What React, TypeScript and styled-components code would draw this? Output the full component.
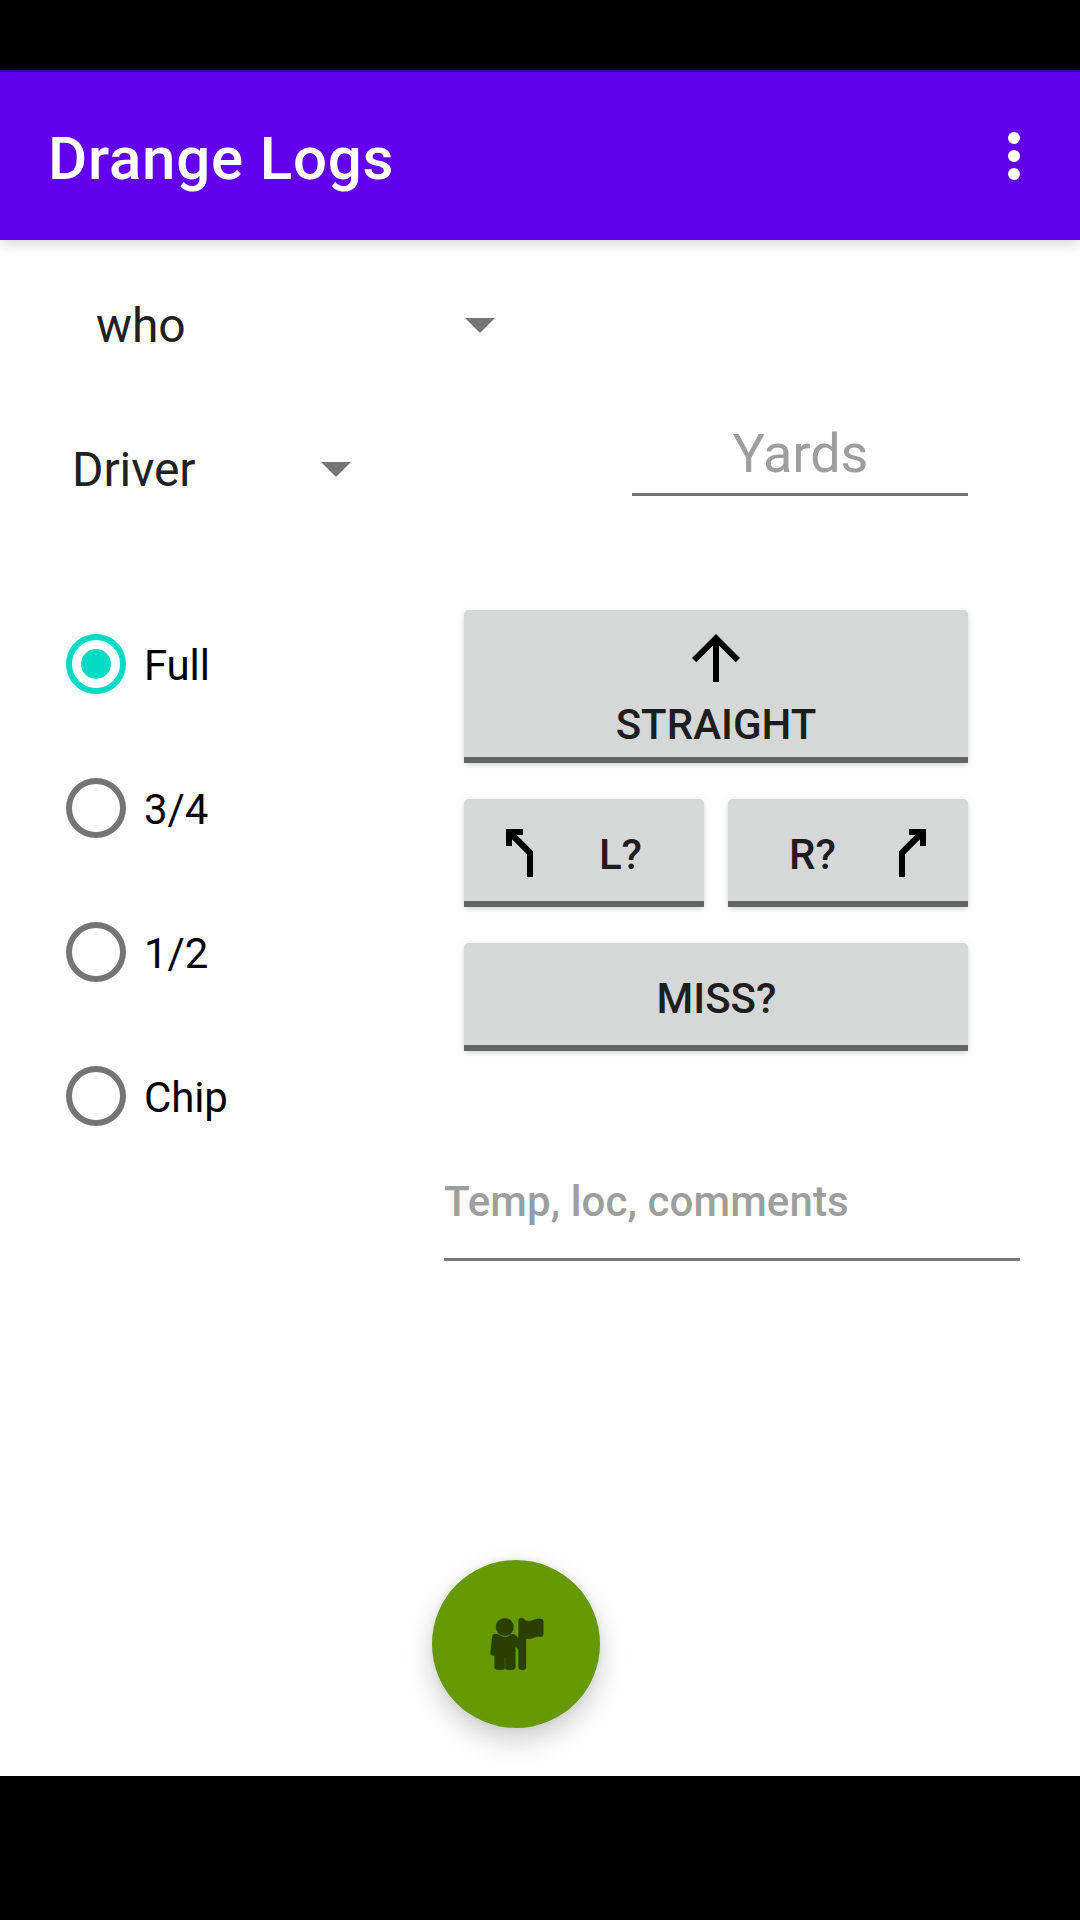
import React, { useState } from "react";
import styled, { createGlobalStyle } from "styled-components";

const GlobalStyle = createGlobalStyle`
  *, *::before, *::after { box-sizing: border-box; }
  body { margin: 0; background: #fff; font-family: Roboto, "Noto Sans", sans-serif; }
  button, input { font-family: inherit; border: 0; padding: 0; margin: 0; background: none; outline: none; border-radius: 0; }
`;

const Screen = styled.div`
  display: flex;
  flex-direction: column;
  width: 1080px;
  height: 1920px;
  background: #fff;
  overflow: hidden;
`;

const StatusBar = styled.div`
  height: 72px;
  flex: none;
  background: #000;
  border-bottom: 2px solid #3700b3;
`;

const NavigationBar = styled.div`
  height: 144px;
  flex: none;
  background: #000;
`;

const AppBar = styled.header`
  display: flex;
  align-items: center;
  justify-content: space-between;
  flex: none;
  height: 168px;
  padding: 0 30px 0 48px;
  background: #6200ee;
  box-shadow: 0 4px 12px rgba(0, 0, 0, 0.16);
`;

const Title = styled.h1`
  margin: 6px 0 0;
  font-size: 60px;
  line-height: 70px;
  font-weight: 500;
  letter-spacing: 0.8px;
  color: #fff;
  white-space: nowrap;
`;

const OverflowButton = styled.button`
  display: flex;
  width: 72px;
  height: 72px;
`;

const Content = styled.main`
  display: flex;
  flex-direction: column;
  flex: 1;
  min-height: 0;
`;

const SpinnerRow = styled.div<{ $left: number; $height: number }>`
  display: flex;
  align-items: flex-start;
  height: ${(p) => p.$height}px;
  padding-left: ${(p) => p.$left}px;
`;

const Spinner = styled.button<{ $width: number; $top: number }>`
  display: flex;
  align-items: center;
  justify-content: space-between;
  flex: none;
  width: ${(p) => p.$width}px;
  height: 72px;
  margin-top: ${(p) => p.$top}px;
  font-size: 48px;
  line-height: 56px;
  letter-spacing: -0.1px;
  color: #212121;
`;

const Caret = styled.span`
  width: 0;
  height: 0;
  margin-bottom: 2px;
  border: 15px solid transparent;
  border-top-color: #757575;
  border-bottom: 0;
`;

const Field = styled.input<{ $width: number; $size: number; $weight: number; $align: string; $height: number; $bottom: number }>`
  flex: none;
  width: ${(p) => p.$width}px;
  height: ${(p) => p.$height}px;
  padding-bottom: ${(p) => p.$bottom}px;
  border-bottom: 3px solid #757575;
  font-size: ${(p) => p.$size}px;
  font-weight: ${(p) => p.$weight};
  text-align: ${(p) => p.$align};
  color: #212121;
  &::placeholder { color: #9e9e9e; opacity: 1; }
`;

const YardsField = styled(Field)`
  margin: 14px 0 0 281px;
  padding-left: 1px;
  padding-top: 2px;
`;

const Columns = styled.div`
  display: flex;
  padding: 8px 60px 0 66px;
`;

const RadioGroup = styled.div`
  display: flex;
  flex-direction: column;
  gap: 84px;
  width: 378px;
  padding-top: 24px;
`;

const RadioOption = styled.label`
  display: flex;
  align-items: center;
  gap: 18px;
  height: 60px;
  font-size: 42px;
  letter-spacing: -0.15px;
  color: #000;
`;

const RadioLabel = styled.span`
  margin-top: 3px;
  line-height: 50px;
`;

const RadioMark = styled.input`
  appearance: none;
  display: grid;
  place-items: center;
  width: 60px;
  height: 60px;
  border: 6px solid #757575;
  border-radius: 50%;
  &:checked { border-color: #03dac5; }
  &:checked::before {
    content: "";
    width: 30px;
    height: 30px;
    border-radius: 50%;
    background: #03dac5;
  }
`;

const Actions = styled.div`
  display: flex;
  flex-direction: column;
`;

const ButtonGrid = styled.div`
  display: grid;
  grid-template-columns: 240px 240px;
  column-gap: 24px;
  row-gap: 36px;
  padding-left: 20px;
`;

const ShotButton = styled.button<{ $wide?: boolean; $stacked?: boolean }>`
  display: flex;
  flex-direction: ${(p) => (p.$stacked ? "column" : "row")};
  align-items: center;
  justify-content: ${(p) => (p.$wide && !p.$stacked ? "center" : "flex-start")};
  grid-column: ${(p) => (p.$wide ? "span 2" : "auto")};
  height: ${(p) => (p.$stacked ? 153 : 108)}px;
  padding: ${(p) => (p.$stacked ? "12px 0 0" : p.$wide ? "6px 0 0 1px" : "6px 24px 0")};
  background: #d6d8d7;
  border-bottom: 6px solid #636564;
  border-radius: 5px 5px 0 0;
  box-shadow: 0 2px 6px rgba(0, 0, 0, 0.18);
  font-size: 42px;
  line-height: 50px;
  font-weight: 500;
  color: #1c1d1c;
`;

const ShotLabel = styled.span<{ $top?: number }>`
  flex: 0 1 auto;
  margin-top: ${(p) => p.$top ?? 3}px;
`;

const SideLabel = styled(ShotLabel)`
  flex: 1;
  padding-left: 1px;
  text-align: center;
`;

const CommentsField = styled(Field)`
  margin-top: 102px;
  letter-spacing: 0.1px;
`;

const FabRow = styled.div`
  display: flex;
  flex: 1;
  align-items: flex-end;
  padding: 0 0 48px 432px;
`;

const Fab = styled.button`
  display: grid;
  place-items: center;
  width: 168px;
  height: 168px;
  border-radius: 50%;
  background: #669900;
  box-shadow: 0 12px 28px rgba(0, 0, 0, 0.2), 0 0 8px rgba(0, 0, 0, 0.06);
`;

const Icon = ({ d, size = 72 }: { d: string; size?: number }) => (
  <svg width={size} height={size} viewBox="0 0 24 24" fill="#000">
    <path d={d} />
  </svg>
);

const UP = "M4 12l1.41 1.41L11 7.83V20h2V7.83l5.58 5.59L20 12l-8-8-8 8z";
const SLIGHT_LEFT = "M11.66 6V4H6v5.66h2V7.41l5 5V20h2v-8.59L9.59 6z";
const SLIGHT_RIGHT = "M12.34 6V4H18v5.66h-2V7.41l-5 5V20H9v-8.59L14.41 6z";

const GolferIcon = () => (
  <svg width="66" height="66" viewBox="-1 1 66 66" fill="#2b4000" stroke="#2b4000" strokeOpacity="0.4" strokeWidth="0.9">
    <circle cx="20.8" cy="17" r="8.8" />
    <path d="M11 24Q14 23.5 16 25.500Q21 28.800 25.500 25.500Q28 23 31 25L34.500 28V11Q34.500 8 37.500 8Q40.500 8 41.500 10.500Q46 12 50 10Q54 8 57.500 9Q59.300 9.500 59.300 11.500V24.500Q59.300 26.700 57 26.700Q53 26 49 28Q45 29.500 42 28.500V57Q42 59.700 39.500 59.700H37.500Q34.600 59.700 34.600 57V39.500L31.300 36.500V57Q31.300 59.700 28.500 59.700H24Q21.800 59.700 21 58.500Q20.200 59.700 18 59.700H13.500Q10.600 59.700 10.600 57V45.500Q6.300 46 6.600 42.500L8.200 27Q8.500 24 11 24Z" />
    <path d="M21 48V60" stroke="#5a8700" strokeOpacity="0.5" strokeWidth="0.8" />
  </svg>
);

const SHOTS = ["Full", "3/4", "1/2", "Chip"];

export default function App() {
  const [shot, setShot] = useState("Full");
  return (
    <>
      <GlobalStyle />
      <Screen>
        <StatusBar />
        <AppBar>
          <Title>Drange Logs</Title>
          <OverflowButton aria-label="More options">
            <svg width="72" height="72" viewBox="0 0 24 24" fill="#fff">
              <circle cx="12" cy="6" r="2" />
              <circle cx="12" cy="12" r="2" />
              <circle cx="12" cy="18" r="2" />
            </svg>
          </OverflowButton>
        </AppBar>
        <Content>
          <SpinnerRow $left={96} $height={158}>
            <Spinner $width={399} $top={50}>
              who
              <Caret />
            </Spinner>
          </SpinnerRow>
          <SpinnerRow $left={72} $height={204}>
            <Spinner $width={279} $top={36}>
              Driver
              <Caret />
            </Spinner>
            <YardsField placeholder="Yards" $width={336} $size={54} $weight={400} $align="center" $height={84} $bottom={0} />
          </SpinnerRow>
          <Columns>
            <RadioGroup>
              {SHOTS.map((name) => (
                <RadioOption key={name}>
                  <RadioMark type="radio" name="shot" checked={shot === name} onChange={() => setShot(name)} />
                  <RadioLabel>{name}</RadioLabel>
                </RadioOption>
              ))}
            </RadioGroup>
            <Actions>
              <ButtonGrid>
                <ShotButton $wide $stacked>
                  <Icon d={UP} />
                  <ShotLabel $top={6}>STRAIGHT</ShotLabel>
                </ShotButton>
                <ShotButton>
                  <Icon d={SLIGHT_LEFT} />
                  <SideLabel>L?</SideLabel>
                </ShotButton>
                <ShotButton>
                  <SideLabel>R?</SideLabel>
                  <Icon d={SLIGHT_RIGHT} />
                </ShotButton>
                <ShotButton $wide>
                  <ShotLabel>MISS?</ShotLabel>
                </ShotButton>
              </ButtonGrid>
              <CommentsField placeholder="Temp, loc, comments" $width={576} $size={42} $weight={500} $align="left" $height={108} $bottom={9} />
            </Actions>
          </Columns>
          <FabRow>
            <Fab aria-label="Log shot">
              <GolferIcon />
            </Fab>
          </FabRow>
        </Content>
        <NavigationBar />
      </Screen>
    </>
  );
}
